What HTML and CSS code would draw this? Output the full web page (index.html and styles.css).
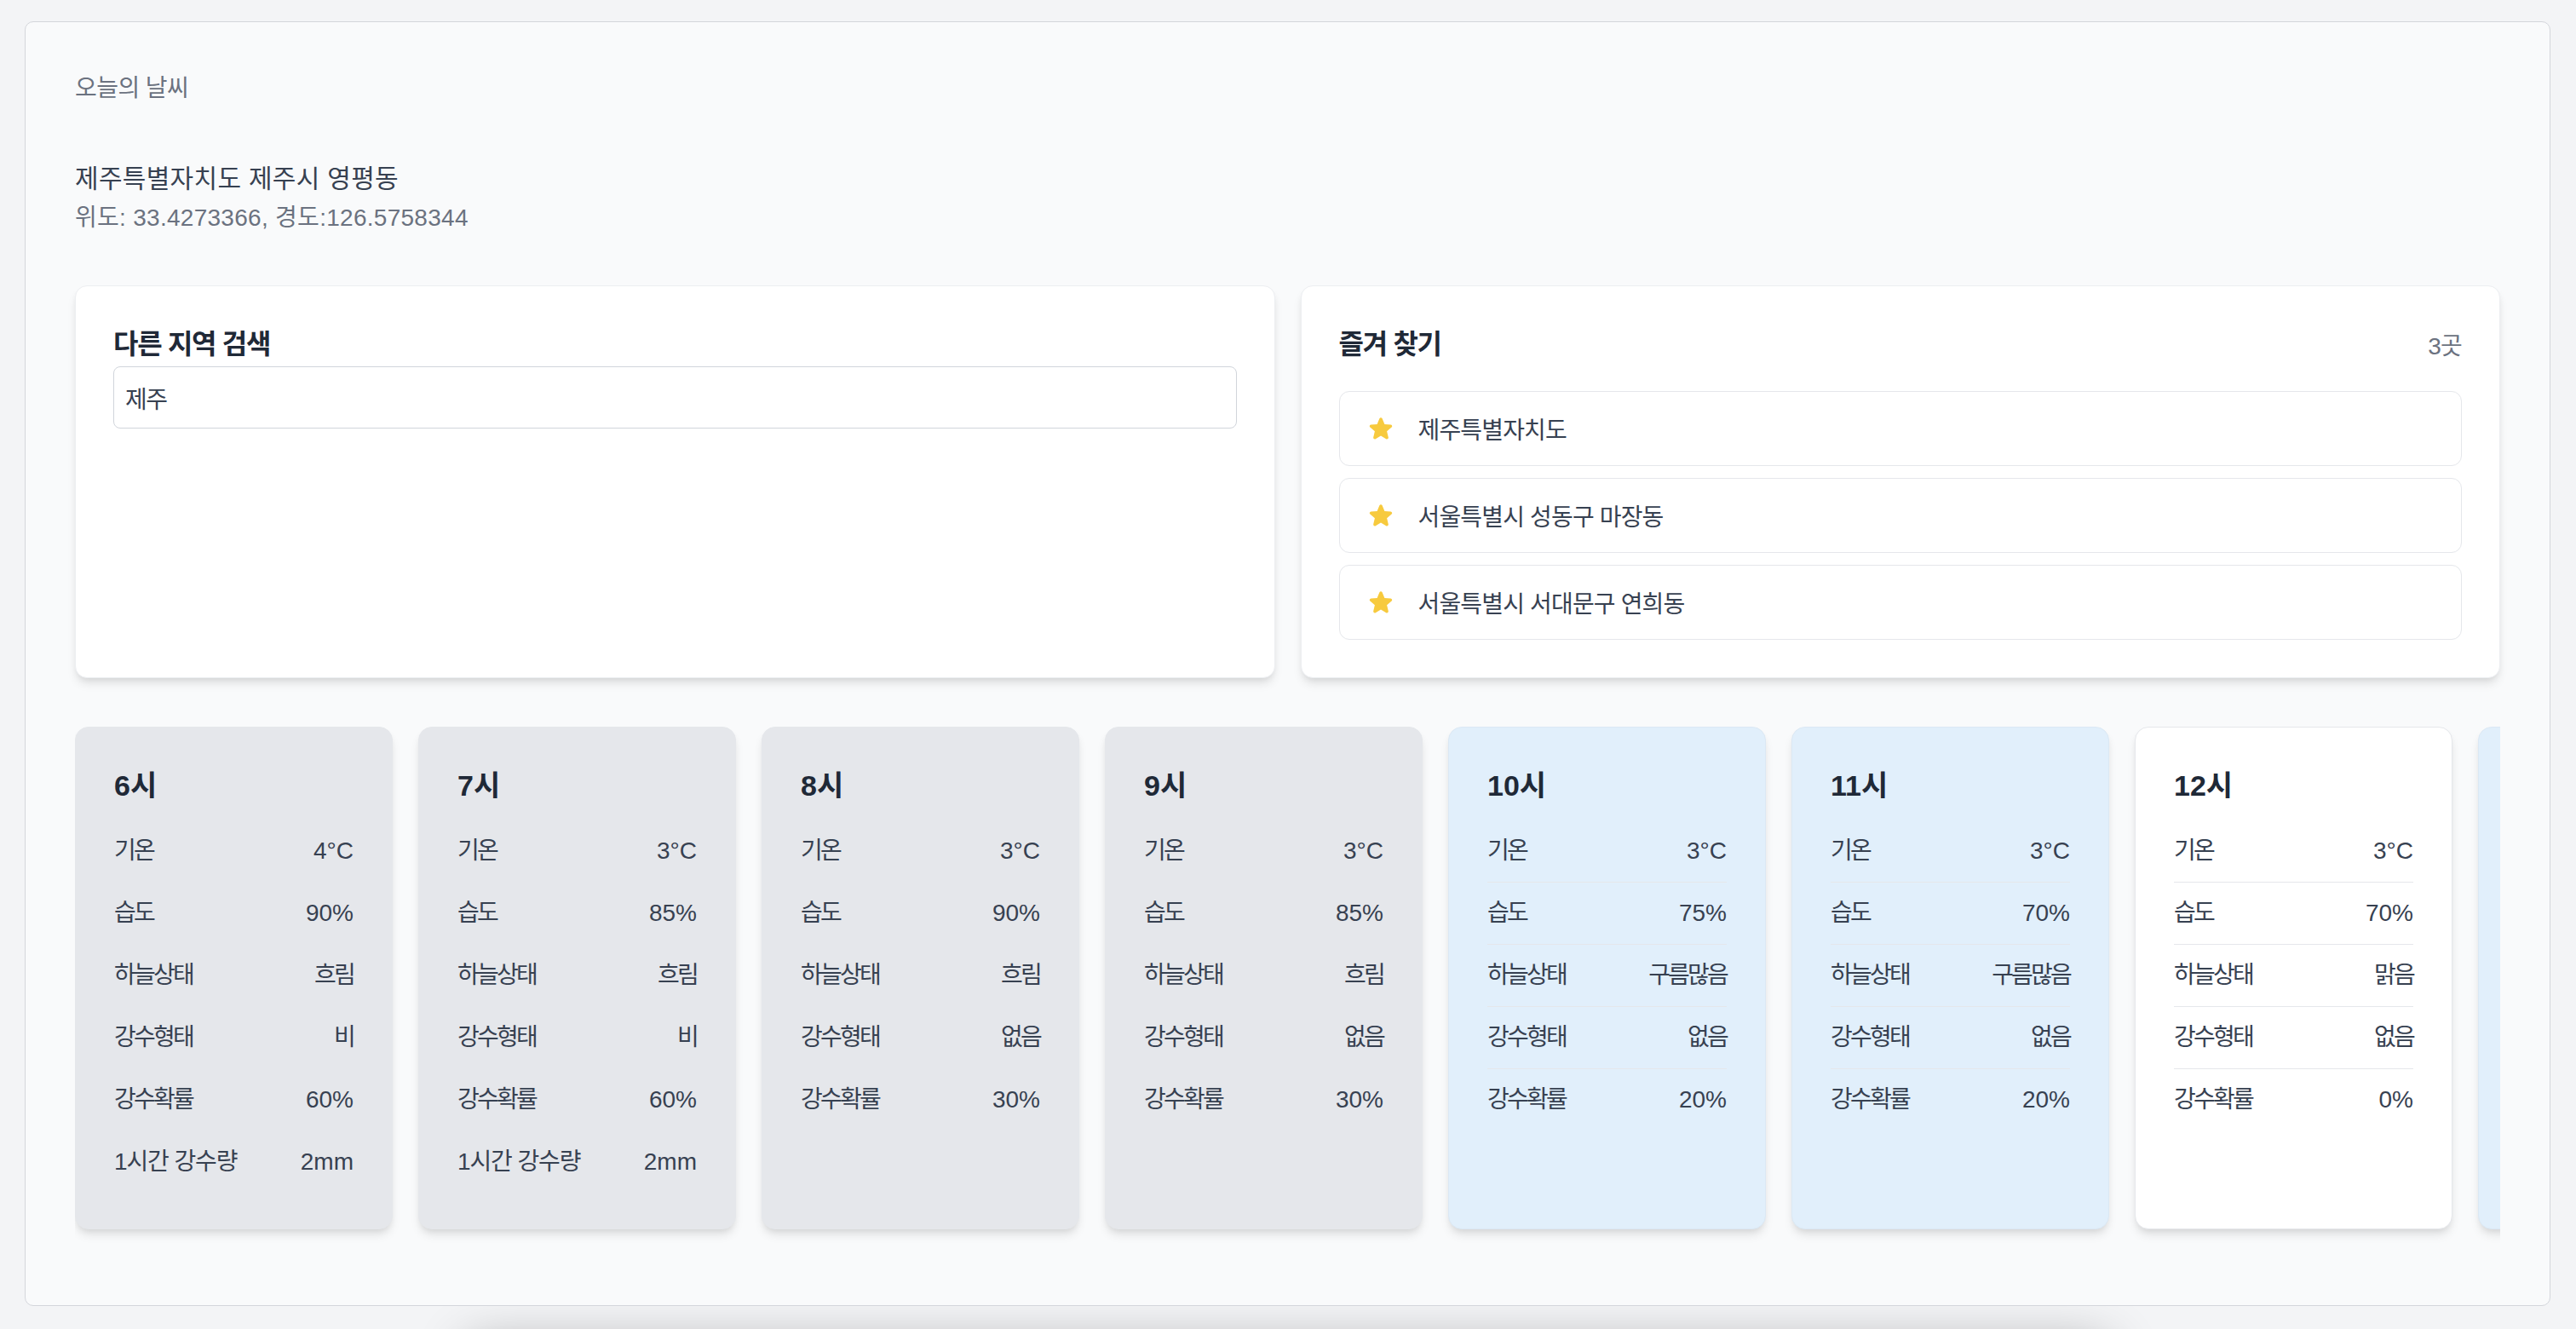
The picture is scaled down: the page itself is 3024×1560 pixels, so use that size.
FILE: index.html
```html
<!DOCTYPE html>
<html lang="ko">
<head>
<meta charset="utf-8">
<title>오늘의 날씨</title>
<link rel="stylesheet" href="styles.css">
</head>
<body>
<main class="panel">
  <p class="eyebrow">오늘의 날씨</p>
  <h1 class="place">제주특별자치도 제주시 영평동</h1>
  <p class="coords">위도: 33.4273366, 경도:126.5758344</p>

  <section class="top-grid">
    <div class="card">
      <label class="card-title" for="q">다른 지역 검색</label>
      <input id="q" class="search" type="text" value="제주">
    </div>
    <div class="card">
      <div class="card-head">
        <h2 class="card-title">즐겨 찾기</h2>
        <span class="count">3곳</span>
      </div>
      <ul class="fav-list">
        <li class="fav">
          <svg class="star" viewBox="0 0 24 24"><path d="M10.788 3.21c.448-1.077 1.976-1.077 2.424 0l2.082 5.006 5.404.434c1.164.093 1.636 1.545.749 2.305l-4.117 3.527 1.257 5.273c.271 1.136-.964 2.033-1.96 1.425L12 18.354 7.373 21.18c-.996.608-2.231-.29-1.96-1.425l1.257-5.273-4.117-3.527c-.887-.76-.415-2.212.749-2.305l5.404-.434 2.082-5.005Z"/></svg>
          <span>제주특별자치도</span>
        </li>
        <li class="fav">
          <svg class="star" viewBox="0 0 24 24"><path d="M10.788 3.21c.448-1.077 1.976-1.077 2.424 0l2.082 5.006 5.404.434c1.164.093 1.636 1.545.749 2.305l-4.117 3.527 1.257 5.273c.271 1.136-.964 2.033-1.96 1.425L12 18.354 7.373 21.18c-.996.608-2.231-.29-1.96-1.425l1.257-5.273-4.117-3.527c-.887-.76-.415-2.212.749-2.305l5.404-.434 2.082-5.005Z"/></svg>
          <span>서울특별시 성동구 마장동</span>
        </li>
        <li class="fav">
          <svg class="star" viewBox="0 0 24 24"><path d="M10.788 3.21c.448-1.077 1.976-1.077 2.424 0l2.082 5.006 5.404.434c1.164.093 1.636 1.545.749 2.305l-4.117 3.527 1.257 5.273c.271 1.136-.964 2.033-1.96 1.425L12 18.354 7.373 21.18c-.996.608-2.231-.29-1.96-1.425l1.257-5.273-4.117-3.527c-.887-.76-.415-2.212.749-2.305l5.404-.434 2.082-5.005Z"/></svg>
          <span>서울특별시 서대문구 연희동</span>
        </li>
      </ul>
    </div>
  </section>

  <section class="hours">
    <article class="hour past">
      <h3 class="hour-title">6<span class="k">시</span></h3>
      <div class="row"><span class="k">기온</span><span>4°C</span></div>
      <div class="row"><span class="k">습도</span><span>90%</span></div>
      <div class="row"><span class="k">하늘상태</span><span class="k">흐림</span></div>
      <div class="row"><span class="k">강수형태</span><span class="k">비</span></div>
      <div class="row"><span class="k">강수확률</span><span>60%</span></div>
      <div class="row"><span class="k2">1시간 강수량</span><span>2mm</span></div>
    </article>
    <article class="hour past">
      <h3 class="hour-title">7<span class="k">시</span></h3>
      <div class="row"><span class="k">기온</span><span>3°C</span></div>
      <div class="row"><span class="k">습도</span><span>85%</span></div>
      <div class="row"><span class="k">하늘상태</span><span class="k">흐림</span></div>
      <div class="row"><span class="k">강수형태</span><span class="k">비</span></div>
      <div class="row"><span class="k">강수확률</span><span>60%</span></div>
      <div class="row"><span class="k2">1시간 강수량</span><span>2mm</span></div>
    </article>
    <article class="hour past">
      <h3 class="hour-title">8<span class="k">시</span></h3>
      <div class="row"><span class="k">기온</span><span>3°C</span></div>
      <div class="row"><span class="k">습도</span><span>90%</span></div>
      <div class="row"><span class="k">하늘상태</span><span class="k">흐림</span></div>
      <div class="row"><span class="k">강수형태</span><span class="k">없음</span></div>
      <div class="row"><span class="k">강수확률</span><span>30%</span></div>
    </article>
    <article class="hour past">
      <h3 class="hour-title">9<span class="k">시</span></h3>
      <div class="row"><span class="k">기온</span><span>3°C</span></div>
      <div class="row"><span class="k">습도</span><span>85%</span></div>
      <div class="row"><span class="k">하늘상태</span><span class="k">흐림</span></div>
      <div class="row"><span class="k">강수형태</span><span class="k">없음</span></div>
      <div class="row"><span class="k">강수확률</span><span>30%</span></div>
    </article>
    <article class="hour cloudy">
      <h3 class="hour-title">10<span class="k">시</span></h3>
      <div class="row"><span class="k">기온</span><span>3°C</span></div>
      <div class="row"><span class="k">습도</span><span>75%</span></div>
      <div class="row"><span class="k">하늘상태</span><span class="k">구름많음</span></div>
      <div class="row"><span class="k">강수형태</span><span class="k">없음</span></div>
      <div class="row"><span class="k">강수확률</span><span>20%</span></div>
    </article>
    <article class="hour cloudy">
      <h3 class="hour-title">11<span class="k">시</span></h3>
      <div class="row"><span class="k">기온</span><span>3°C</span></div>
      <div class="row"><span class="k">습도</span><span>70%</span></div>
      <div class="row"><span class="k">하늘상태</span><span class="k">구름많음</span></div>
      <div class="row"><span class="k">강수형태</span><span class="k">없음</span></div>
      <div class="row"><span class="k">강수확률</span><span>20%</span></div>
    </article>
    <article class="hour clear">
      <h3 class="hour-title">12<span class="k">시</span></h3>
      <div class="row"><span class="k">기온</span><span>3°C</span></div>
      <div class="row"><span class="k">습도</span><span>70%</span></div>
      <div class="row"><span class="k">하늘상태</span><span class="k">맑음</span></div>
      <div class="row"><span class="k">강수형태</span><span class="k">없음</span></div>
      <div class="row"><span class="k">강수확률</span><span>0%</span></div>
    </article>
    <article class="hour cloudy">
      <h3 class="hour-title">13<span class="k">시</span></h3>
      <div class="row"><span class="k">기온</span><span>3°C</span></div>
      <div class="row"><span class="k">습도</span><span>65%</span></div>
      <div class="row"><span class="k">하늘상태</span><span class="k">구름많음</span></div>
      <div class="row"><span class="k">강수형태</span><span class="k">없음</span></div>
      <div class="row"><span class="k">강수확률</span><span>20%</span></div>
    </article>
  </section>
</main>
<div class="below"></div>
</body>
</html>
```

FILE: styles.css
```css
* { box-sizing: border-box; }

html, body { margin: 0; }

body {
  background: #f3f4f6;
  padding: 25px 30px 0 29px;
  font-family: "Liberation Sans", "Noto Sans CJK KR", sans-serif;
  color: #374151;
  overflow: hidden;
}

.k { letter-spacing: -0.1em; }
.k2 { letter-spacing: -0.04em; }

.panel {
  background: #f9fafb;
  border: 1px solid #d4d6db;
  border-radius: 10px;
  padding: 58px;
  position: relative;
  z-index: 1;
}

.eyebrow {
  margin: 0;
  font-size: 28px;
  line-height: 40px;
  color: #6b7280;
  letter-spacing: -0.02em;
}

.place {
  margin: 62px 0 0;
  font-size: 30px;
  line-height: 48px;
  font-weight: 400;
  color: #374151;
  letter-spacing: 0.01em;
}

.coords {
  margin: 2px 0 0;
  font-size: 28px;
  line-height: 40px;
  color: #6b7280;
  letter-spacing: 0.01em;
}

.top-grid {
  margin-top: 59px;
  display: grid;
  grid-template-columns: 1fr 1fr;
  gap: 30px;
}

.card {
  background: #fff;
  border: 1px solid #eceef1;
  border-radius: 14px;
  padding: 44px;
  box-shadow: 0 8px 12px -2px rgba(0,0,0,.1), 0 4px 8px -4px rgba(0,0,0,.1);
  display: flex;
  flex-direction: column;
}

.card-title {
  display: block;
  margin: 0;
  font-size: 32px;
  line-height: 48px;
  font-weight: 700;
  color: #1f2937;
  letter-spacing: -0.04em;
}

.search {
  margin-top: 2px;
  height: 73px;
  width: 100%;
  border: 1px solid #d1d5db;
  border-radius: 8px;
  padding: 0 13px;
  font-family: inherit;
  font-size: 28px;
  color: #374151;
  background: #fff;
  outline: none;
  letter-spacing: -0.05em;
}

.card-head {
  display: flex;
  justify-content: space-between;
  align-items: center;
  margin-bottom: 31px;
}

.count {
  font-size: 28px;
  color: #6b7280;
  letter-spacing: -0.03em;
}

.fav-list {
  list-style: none;
  margin: 0;
  padding: 0;
  display: flex;
  flex-direction: column;
  gap: 14px;
}

.fav {
  height: 88px;
  border: 1px solid #e5e7eb;
  border-radius: 12px;
  padding: 0 32px;
  display: flex;
  align-items: center;
  gap: 28px;
  font-size: 28px;
  color: #374151;
  letter-spacing: -0.03em;
}

.star {
  width: 32px;
  height: 32px;
  fill: #f7ca3e;
  flex: none;
}

.hours {
  margin-top: 57px;
  display: flex;
  gap: 30px;
  overflow-x: auto;
  padding-bottom: 31px;
  scrollbar-width: none;
}
.hours::-webkit-scrollbar { display: none; }

.hour {
  flex: 0 0 373px;
  border-radius: 16px;
  border: 1px solid transparent;
  padding: 44px 45px 42px;
  box-shadow: 0 8px 12px -2px rgba(0,0,0,.1), 0 4px 8px -4px rgba(0,0,0,.1);
}

.hour.past { background: #e5e7eb; border-color: #e5e7eb; }
.hour.cloudy { background: #e1effb; border-color: #dbe8f4; }
.hour.clear { background: #fff; border-color: #e5e7eb; }

.hour-title {
  margin: 0 0 17px;
  font-size: 34px;
  line-height: 48px;
  font-weight: 700;
  color: #1f2937;
}

.row {
  display: flex;
  justify-content: space-between;
  padding: 16px 0;
  border-bottom: 1px solid #e5e7eb;
  font-size: 28px;
  line-height: 40px;
  color: #374151;
}
.row:last-child { border-bottom: 0; }

.below {
  width: 1930px;
  height: 300px;
  margin: 44px auto 0;
  background: #f9fafb;
  border-radius: 16px;
  box-shadow: 0 0 60px rgba(0,0,0,.3);
}
```
